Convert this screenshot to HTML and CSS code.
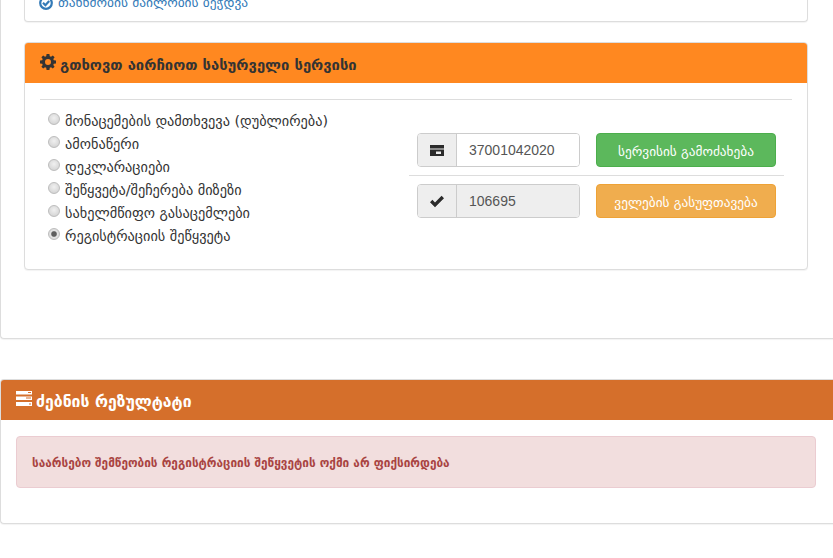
FILE: index.html
```html
<!DOCTYPE html>
<html lang="ka">
<head>
<meta charset="utf-8">
<title>სერვისი</title>
<link rel="stylesheet" href="styles.css">
</head>
<body>
<div class="page">
  <section class="outer outer-first">
    <div class="inner inner-top">
      <a class="print-link" href="#">
        <svg class="ok-icon" viewBox="0 0 14 14" width="14" height="14"><circle cx="7" cy="7" r="5.800" fill="none" stroke="#337ab7" stroke-width="2.200"/><path d="M4 6.800 L6.400 9.200 L10.200 5" fill="none" stroke="#337ab7" stroke-width="2.200"/></svg>
        <span>თანხმობის მაილობის ბეჭდვა</span>
      </a>
    </div>
    <div class="inner inner-service">
      <header class="head head-orange">
        <svg class="head-icon" viewBox="0 0 16 16" width="16" height="16"><path fill="#333" fill-rule="evenodd" d="M6.600 0h2.800l.4 2.200 1.200.5L12.800 1.400l1.800 1.800-1.300 1.800.5 1.200 2.200.4v2.800l-2.200.4-.5 1.200 1.300 1.800-1.800 1.800-1.800-1.300-1.200.5-.4 2.200H6.600l-.4-2.200-1.200-.5-1.800 1.300-1.800-1.800 1.300-1.800-.5-1.200L0 9.400V6.600l2.200-.4.5-1.200L1.400 3.200l1.800-1.800L5 2.700l1.200-.5zM8 5a3 3 0 1 0 0 6 3 3 0 0 0 0-6z"/></svg>
        <h2 class="head-title head-title-service">გთხოვთ აირჩიოთ სასურველი სერვისი</h2>
      </header>
      <div class="service-body">
        <hr class="rule">
        <div class="service-grid">
          <form class="options">
            <label class="option"><input type="radio" name="svc"><span>მონაცემების დამთხვევა (დუბლირება)</span></label>
            <label class="option"><input type="radio" name="svc"><span>ამონაწერი</span></label>
            <label class="option"><input type="radio" name="svc"><span>დეკლარაციები</span></label>
            <label class="option"><input type="radio" name="svc"><span>შეწყვეტა/შეჩერება მიზეზი</span></label>
            <label class="option"><input type="radio" name="svc"><span>სახელმწიფო გასაცემლები</span></label>
            <label class="option"><input type="radio" name="svc" checked><span>რეგისტრაციის შეწყვეტა</span></label>
          </form>
          <div class="controls">
            <div class="control-row">
              <div class="input-group">
                <span class="addon"><svg viewBox="0 0 14 11" width="14" height="11"><path fill="#2b2b2b" fill-rule="evenodd" d="M0 0h14v11H0zM0 3.500v1h14v-1zM6 6.500v2.500h5V6.500z"/></svg></span>
                <span class="field">37001042020</span>
              </div>
              <button class="btn btn-green" type="button">სერვისის გამოძახება</button>
            </div>
            <hr class="rule rule-tight">
            <div class="control-row">
              <div class="input-group">
                <span class="addon"><svg viewBox="0 0 16 13" width="16" height="13"><path d="M1 7.200 L3.400 4.800 L6 7.400 L12.600 .8 L15 3.200 L6 12.200 Z" fill="#2b2b2b"/></svg></span>
                <span class="field field-readonly">106695</span>
              </div>
              <button class="btn btn-amber" type="button">ველების გასუფთავება</button>
            </div>
          </div>
        </div>
      </div>
    </div>
  </section>
  <section class="outer outer-result">
    <header class="head head-dark">
      <svg class="head-icon" viewBox="0 0 16 15" width="16" height="15"><path fill="#fff" d="M0 0h16v3.500H0zM0 5.500h16v3.500H0zM0 11h16v4H0z"/><path fill="#d56f2b" d="M12 1h3v1h-3zM10 6.500h5v1h-5zM13 12.500h2v1h-2z"/></svg>
      <h2 class="head-title head-title-result">ძებნის რეზულტატი</h2>
    </header>
    <div class="result-body">
      <div class="alert">საარსებო შემწეობის რეგისტრაციის შეწყვეტის ოქმი არ ფიქსირდება</div>
    </div>
  </section>
</div>
</body>
</html>
```

FILE: styles.css
```css
* { box-sizing: border-box; }
html, body { margin: 0; padding: 0; height: 100%; overflow: hidden; background: #fff; }
body { font-family: "DejaVu Sans", sans-serif; font-size: 14px; color: #333; }
.page { margin-top: -50px; width: 900px; }

.outer { background: #fff; border: 1px solid #ddd; border-right: 0; border-radius: 4px 0 0 4px; box-shadow: 0 1px 1px rgba(0,0,0,.05); }
.outer-first { padding: 0 0 0 23px; height: 389px; }
.outer-result { margin-top: 40px; height: 145px; }

.inner { width: 784px; background: #fff; border: 1px solid #ddd; border-radius: 4px; box-shadow: 0 1px 1px rgba(0,0,0,.05); }
.inner-top { height: 71px; padding: 43px 0 0 14px; border-top: 0; }
.inner-service { margin-top: 20px; height: 228px; }

.print-link { color: #337ab7; text-decoration: none; font-size: 13.400px; line-height: 18px; display: flex; align-items: center; gap: 5px; }

.head { display: flex; align-items: center; height: 40px; gap: 4px; padding-left: 15px; }
.head-orange { background: #ff8820; border-radius: 3px 3px 0 0; color: #333; }
.head-dark { background: #d56f2b; color: #fff; border-radius: 3px 0 0 0; }
.head-icon { margin-top: -3px; }
.head-title { margin: 0; font-weight: bold; line-height: 20px; padding-top: 4px; }
.head-title-service { font-size: 14.800px; }
.head-title-result { font-size: 15.800px; }

.service-body { padding: 16px 15px 0; }
.rule { border: 0; border-top: 1px solid #ddd; margin: 0; }
.service-grid { display: flex; padding-top: 9px; }
.options { width: 369px; display: flex; flex-direction: column; padding-left: 8px; }
.option { display: flex; align-items: center; height: 23.100px; gap: 5px; font-size: 14.300px; }
.option input { appearance: none; margin: -4px 0 0; width: 12px; height: 12px; border-radius: 50%; border: 1px solid #bdbdbd; background: radial-gradient(circle at 50% 40%, #f0f0f0 0, #d8d8d8 70%, #c2c2c2 100%); }
.option input:checked { background: radial-gradient(circle, #5e5e5e 0, #5e5e5e 32%, #e4e4e4 48%, #d0d0d0 100%); }
.controls { margin-top: 24px; width: 375px; }
.control-row { display: flex; padding-left: 8px; gap: 16px; height: 34px; }
.rule-tight { margin: 8px 0; }
.input-group { display: flex; width: 163px; height: 34px; border: 1px solid #ccc; border-radius: 4px; overflow: hidden; }
.addon { width: 39px; background: #eee; border-right: 1px solid #ccc; display: flex; align-items: center; justify-content: center; }
.field { flex: 1; padding-left: 12px; display: flex; align-items: center; font-family: "Liberation Sans", sans-serif; font-size: 14px; color: #555; background: #fff; }
.field-readonly { background: #eee; }
.btn { width: 180px; height: 34px; border: 1px solid; border-radius: 4px; color: #fff; font: 13.300px "DejaVu Sans", sans-serif; padding: 2px 0 0; }
.btn-green { background: #5cb85c; border-color: #4cae4c; }
.btn-amber { background: #f0ad4e; border-color: #eea236; }

.result-body { padding: 16px 15px; }
.alert { width: 800px; height: 52px; background: #f2dede; border: 1px solid #ebccd1; border-radius: 4px; color: #a94442; font-size: 11.800px; font-weight: bold; padding: 2px 0 0 15px; display: flex; align-items: center; }
```
